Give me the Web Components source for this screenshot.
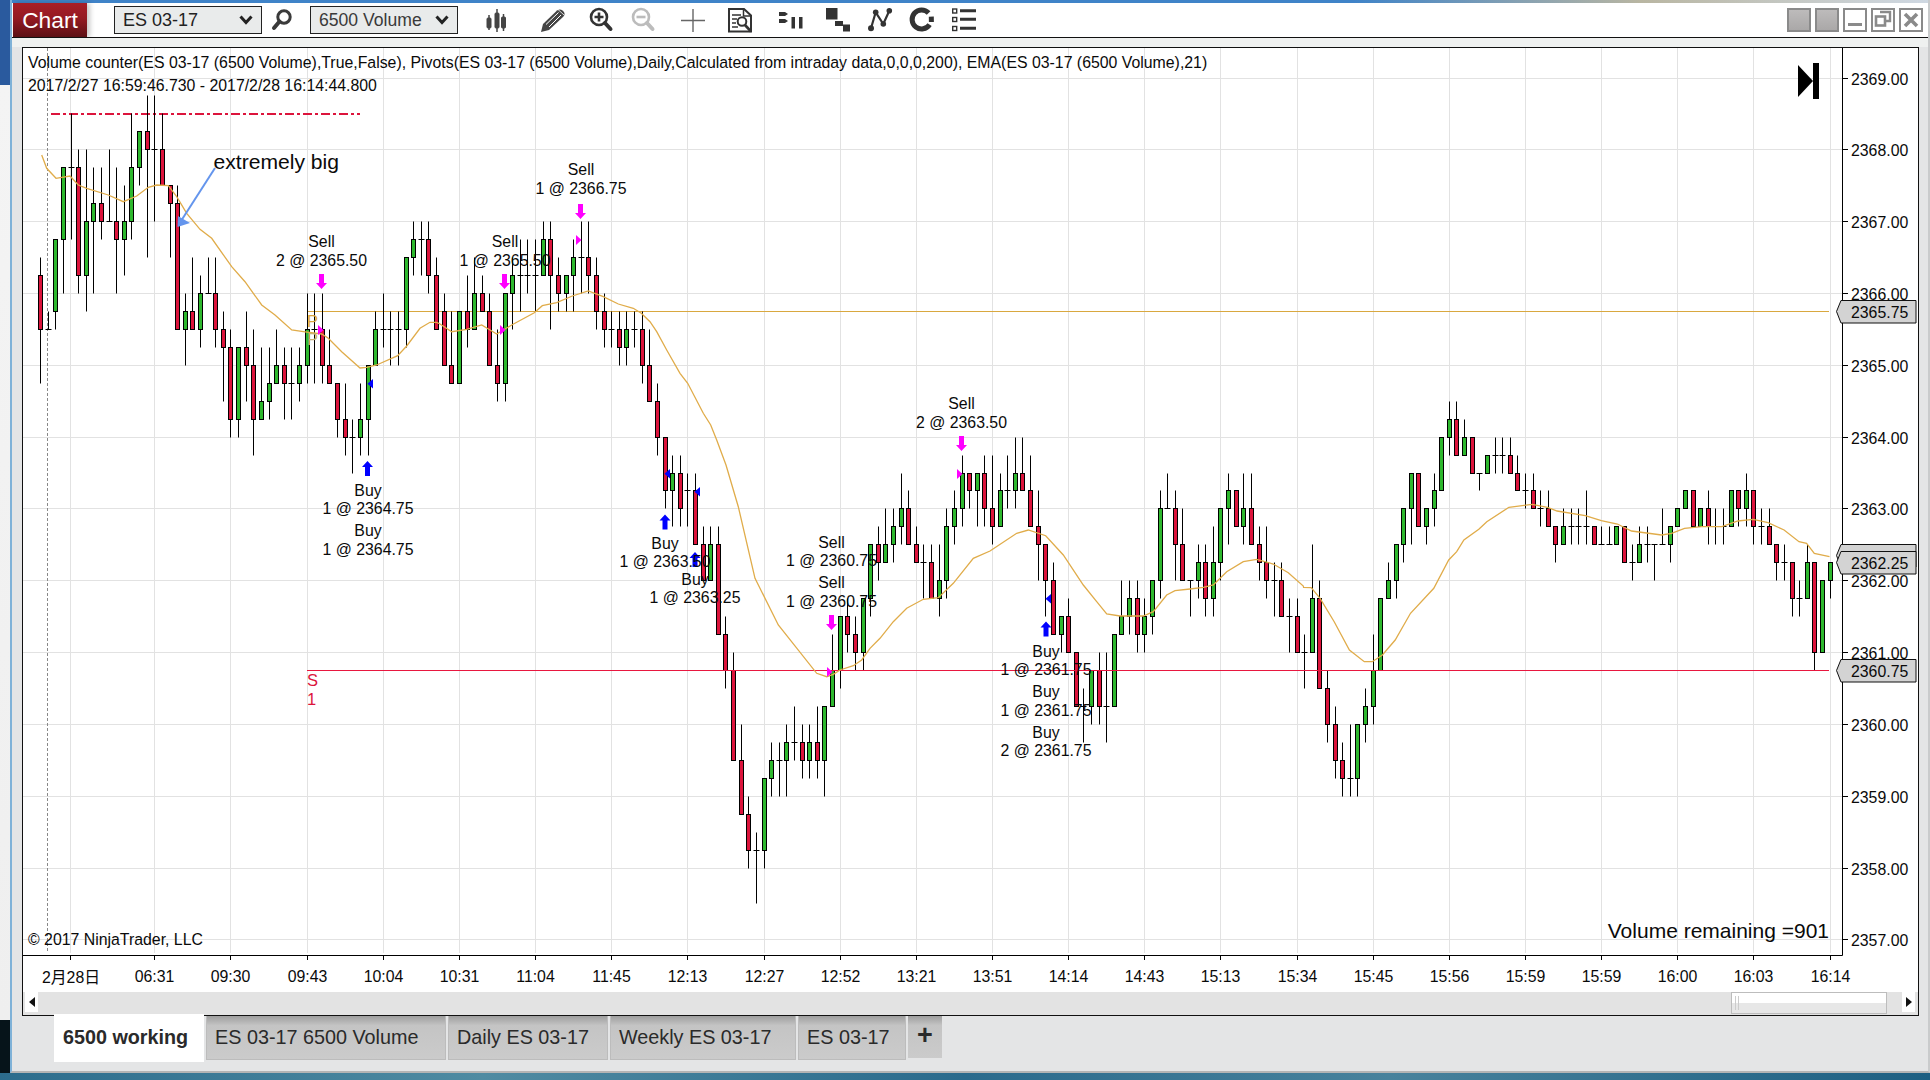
<!DOCTYPE html>
<html lang="en"><head><meta charset="utf-8"><title>Chart</title>
<style>html,body{margin:0;padding:0;height:1080px;overflow:hidden;background:#fff;font-family:"Liberation Sans","Noto Sans CJK SC",sans-serif}</style>
</head><body>
<nt-desktop>
  <nt-toolbar slot="toolbar">
    <nt-brand>Chart</nt-brand>
    <nt-select style="margin-left:27px;width:148px;color:#222;font-size:18px">ES 03-17</nt-select>
    <nt-icon name="search" style="margin-left:8px"></nt-icon>
    <nt-select style="margin-left:16px;width:148px;color:#3a3a3a;font-size:17.6px">6500 Volume</nt-select>
    <nt-icon name="bars" style="margin-left:26px"></nt-icon>
    <nt-icon name="pencil" style="margin-left:33px"></nt-icon>
    <nt-icon name="zoomin" style="margin-left:23px"></nt-icon>
    <nt-icon name="zoomout" style="margin-left:18px"></nt-icon>
    <nt-icon name="cross" style="margin-left:27px"></nt-icon>
    <nt-icon name="report" style="margin-left:23px"></nt-icon>
    <nt-icon name="align" style="margin-left:27px"></nt-icon>
    <nt-icon name="squares" style="margin-left:23px"></nt-icon>
    <nt-icon name="nodes" style="margin-left:18px"></nt-icon>
    <nt-icon name="circle" style="margin-left:18px"></nt-icon>
    <nt-icon name="list" style="margin-left:18px"></nt-icon>
    <nt-winbtn kind="fill" style="margin-left:auto"></nt-winbtn>
    <nt-winbtn kind="fill"></nt-winbtn>
    <nt-winbtn kind="min"></nt-winbtn>
    <nt-winbtn kind="restore"></nt-winbtn>
    <nt-winbtn kind="close"></nt-winbtn>
  </nt-toolbar>
  <nt-chart slot="chart"></nt-chart>
  <nt-tabs slot="tabs">
    <nt-tab active style="width:150px">6500 working</nt-tab>
    <nt-tab style="width:240px">ES 03-17 6500 Volume</nt-tab>
    <nt-tab style="width:160px">Daily ES 03-17</nt-tab>
    <nt-tab style="width:186px">Weekly ES 03-17</nt-tab>
    <nt-tab style="width:108px">ES 03-17</nt-tab>
    <nt-tab plus style="width:34px">+</nt-tab>
  </nt-tabs>
</nt-desktop>
<script>
const FONT='"Liberation Sans","Noto Sans CJK SC",sans-serif';
function def(name,css,html,init){
  customElements.define(name,class extends HTMLElement{
    constructor(){super();const r=this.attachShadow({mode:'open'});
      r.innerHTML='<style>'+css+'</style>'+(typeof html==='function'?html(this):html);}
    connectedCallback(){if(init&&!this._i){this._i=1;init(this)}}
  });
}
def('nt-desktop',`
:host{display:grid;grid-template-columns:10px 1fr;grid-template-rows:1fr 7px;width:1930px;height:1080px;font-family:${FONT}}
.left{grid-row:1;display:flex;flex-direction:column}
.a{height:85px;background:#2a5a9e}.b{height:935px;background:linear-gradient(#f4f4f4,#efefef)}.c{flex:1;background:#06141a}
.win{background:#e4e5e6;border-left:2px solid #7fb2d8;border-right:2px solid #c9cbcc;border-bottom:2px solid #b4b4b4;display:flex;flex-direction:column;min-width:0}
.top{height:3px;background:linear-gradient(90deg,#3f83c8 0,#3f83c8 70%,#b9b6a2 85%,#cfd8e2 100%)}
.strip{height:9px;background:#eff1f0;border-top:1px solid #111}
.chartwrap{padding:0 9px 0 10px}
.sea{grid-column:1/3;background:linear-gradient(90deg,#2c6c8c,#4f8ba2 25%,#2a6a8c 50%,#48829c 72%,#1d5f82)}
`,`<div class="left"><div class="a"></div><div class="b"></div><div class="c"></div></div>
<div class="win"><div class="top"></div><slot name="toolbar"></slot><div class="strip"></div><div class="chartwrap"><slot name="chart"></slot></div><slot name="tabs"></slot></div>
<div class="sea"></div>`);
def('nt-toolbar',`:host{display:flex;align-items:center;height:34px;background:#fff;padding:0 5px 0 1px}`,`<slot></slot>`);
def('nt-brand',`:host{display:flex;align-items:center;justify-content:center;width:74px;height:34px;color:#fff;font-size:22.8px;box-shadow:3px 0 5px rgba(0,0,0,.22);background:linear-gradient(#a81e28,#941a22 45%,#5c1015)}`,`<slot></slot>`);
def('nt-select',`:host{display:flex;align-items:center;box-sizing:border-box;height:28px;border:1px solid #222;background:#e9ebeb;padding-left:8px;position:relative}
svg{position:absolute;right:8px;top:8px}`,`<slot></slot><svg width="14" height="10" viewBox="0 0 14 10"><path d="M1.5 1.5 7 7.5 12.5 1.5" fill="none" stroke="#222" stroke-width="3"/></svg>`);
const I={
search:'<circle cx="14" cy="9" r="6.2" fill="none" stroke="#3a3a3a" stroke-width="3"/><path d="M9.5 13.5 4 20" stroke="#3a3a3a" stroke-width="4" stroke-linecap="round"/>',
bars:'<g fill="#444" stroke="#444"><path d="M5 7v15M13 1v23M19.5 6v17" stroke-width="1.5"/><rect x="3" y="10" width="4" height="10" rx="1"/><rect x="11" y="5" width="4" height="15" rx="1"/><rect x="17.5" y="9" width="4" height="11" rx="1"/></g>',
pencil:'<path d="M0 24 2 16 16 2.5Q19 .5 21.5 2.5L23 4Q24.5 6.5 22 9L8 22Z" fill="#444"/><path d="M5 16.5 17.5 4.5M8 19 20 7" stroke="#fff" stroke-width="1"/><path d="M17 1.5 23 7" stroke="#fff" stroke-width=".8"/>',
zoomin:'<circle cx="11" cy="9" r="8" fill="none" stroke="#333" stroke-width="2.6"/><path d="M17 15 22.5 21" stroke="#333" stroke-width="4" stroke-linecap="round"/><path d="M6.5 9h9M11 4.5v9" stroke="#333" stroke-width="2.6"/>',
zoomout:'<circle cx="11" cy="9" r="8" fill="none" stroke="#bcbcbc" stroke-width="2.6"/><path d="M17 15 22.5 21" stroke="#bcbcbc" stroke-width="4" stroke-linecap="round"/><path d="M6.5 9h9" stroke="#bcbcbc" stroke-width="2.6"/>',
cross:'<path d="M0 12.5H24M12 1V24" stroke="#666" stroke-width="1.4"/>',
report:'<path d="M1 1H16L23 7.5V23.5H1Z" fill="#fff" stroke="#333" stroke-width="2"/><path d="M15.5 1V8H23" fill="none" stroke="#333" stroke-width="1.5"/><path d="M4 7h9M4 11h5M4 15h4M4 19h6" stroke="#333" stroke-width="1.6"/><circle cx="14" cy="13.5" r="4.3" fill="#fff" stroke="#333" stroke-width="2"/><path d="M17 17 23 23.5" stroke="#333" stroke-width="2.6"/>',
align:'<path d="M0 4H6L9 6 6 8H0ZM0 11H6L9 13 6 15H0Z" fill="#333"/><rect x="12.5" y="9" width="3.5" height="11.5" fill="#333"/><rect x="20" y="9" width="3.5" height="11.5" fill="#333"/>',
squares:'<path d="M0 0H11.5V11.5H0ZM9 13H17V18H9ZM17 16.5H24V23.5H17Z" fill="#333"/>',
nodes:'<path d="M3 20.3 7.7 4.3 15.3 16 21.3 2.7" fill="none" stroke="#333" stroke-width="2.2"/><circle cx="3" cy="20.3" r="3" fill="#333"/><circle cx="7.7" cy="4.3" r="2.8" fill="#333"/><circle cx="15.3" cy="16" r="2.8" fill="#333"/><circle cx="21.3" cy="2.7" r="2.8" fill="#333"/>',
circle:'<path d="M19.6 16.6A9.5 9.5 0 1 1 18.6 5M21.3 8.6 21.4 14" fill="none" stroke="#333" stroke-width="5"/>',
list:'<g fill="#fff" stroke="#333" stroke-width="1.4"><rect x=".7" y="1" width="4" height="4"/><rect x=".7" y="9.5" width="4" height="4"/><rect x=".7" y="18.5" width="4" height="4"/></g><path d="M8 2.8H24M8 11.3H24M8 20.3H24" stroke="#333" stroke-width="3"/>'
};
def('nt-icon',`:host{display:block;width:24px;height:24px;flex:none}svg{display:block;overflow:visible}`,
  el=>`<svg width="24" height="24" viewBox="0 0 24 24">${I[el.getAttribute('name')]||''}</svg>`);
const W={min:'<path d="M5 16.5H19" stroke="#8a8a8a" stroke-width="3"/>',
restore:'<path d="M9 4H19V13H15" fill="none" stroke="#8a8a8a" stroke-width="2.4"/><rect x="5" y="8.5" width="9" height="9" fill="none" stroke="#8a8a8a" stroke-width="2.6"/>',
close:'<path d="M6 6 18 18M18 6 6 18" stroke="#8a8a8a" stroke-width="3.6"/>',fill:''};
def('nt-winbtn',`:host{display:block;box-sizing:border-box;width:24px;height:24px;margin-right:4px;border:2px solid #8a8a8a;background:#fff;flex:none}
:host([kind=fill]){background:linear-gradient(#bdbbbb,#aaa8a8)}:host(:last-child){margin-right:0}
svg{display:block;margin:-2px}`,el=>`<svg width="24" height="24" viewBox="0 0 24 24">${W[el.getAttribute('kind')]}</svg>`);
def('nt-tabs',`:host{display:flex;gap:2px;padding-left:42px;height:55px;align-items:flex-start;color:#2a2a2a}`,`<slot></slot>`);
def('nt-tab',`:host{display:flex;align-items:center;box-sizing:border-box;height:44px;padding-left:8px;font-size:19.8px;border:1px solid #bcbcbc;border-top:0;background:linear-gradient(#9e9e9e,#c4c4c4 22%,#cbcbcb)}
:host([active]){height:48px;margin-top:-2px;padding-bottom:2px;background:#fff;border:0;font-weight:bold;font-size:19.75px;padding-left:9px;position:relative}
:host([plus]){height:42px;justify-content:center;padding:0 0 3px;border:0;font-weight:bold;font-size:27px}`,`<slot></slot>`);
def('nt-scrollbar',`:host{display:block;position:relative;height:23px;background:#e3e3e3}
.b{position:absolute;top:0;width:13px;height:20px;background:#fff;display:flex;align-items:center;justify-content:center}
.l{left:2px}.r{right:3px}
.t{position:absolute;left:1707.5px;top:0;box-sizing:border-box;width:156px;height:22px;border:1.5px solid #bdbdbd;background:linear-gradient(#fff 50%,#e7e7e7 50%)}
.t i{position:absolute;left:3px;top:3px;width:1px;height:14px;background:#ccc;box-shadow:3px 0 #ccc}`,
`<div class="b l"><svg width="6" height="10"><path d="M6 0V10L0 5Z" fill="#111"/></svg></div><div class="t"><i></i></div><div class="b r"><svg width="6" height="10"><path d="M0 0V10L6 5Z" fill="#111"/></svg></div>`);

const BARS=`R 11 14 10 17,D 14 13 14,G 9 13 9 14,G 5 9 5 12,D 5 2 9,R 5 11 4 12,G 8 11 4 13,G 7 8 5 12,R 7 8 5 9,D 8 4 8,R 8 9 5 12,G 8 9 6 11,G 5 8 2 9,G 3 5 3 6,R 3 4 1 10,D 4 1 8,R 4 6 2 6,R 6 7 6 10,R 7 14 6 14,G 13 14 12 16,R 13 14 10 14,G 12 14 11 15,D 12 10 12,R 12 14 10 15,R 14 15 13 18,R 15 19 14 20,G 15 19 15 20,R 15 16 13 18,R 16 19 14 21,G 18 19 15 19,G 17 18 15 19,G 16 17 14 17,R 16 17 15 19,D 17 15 19,G 16 17 15 18,G 14 16 12 17,D 14 12 17,R 14 16 12 17,R 16 17 14 17,R 17 19 17 20,R 19 20 17 21,D 20 19 22,G 19 20 17 21,G 16 19 16 21,G 14 16 13 16,D 14 12 15,D 14 13 16,D 14 13 16,G 10 14 10 15,G 9 10 8 11,D 9 8 11,R 9 11 8 12,R 11 14 10 14,R 13 16 12 16,R 16 17 13 17,G 13 17 13 17,R 13 14 11 15,G 12 14 10 14,R 12 13 11 13,R 13 16 12 16,R 16 17 14 18,G 12 17 12 18,G 11 12 10 14,D 11 9 13,D 11 9 12,D 11 9 13,G 9 11 8 11,R 9 11 8 14,R 11 12 10 13,G 11 12 11 13,G 10 11 9 13,D 10 8 12,R 10 11 8 12,R 11 13 10 14,R 13 14 12 15,D 14 13 15,R 14 15 13 16,G 14 15 13 16,D 14 13 15,R 14 16 13 17,R 16 18 14 18,R 18 20 17 21,R 20 23 20 24,G 22 23 21 25,R 22 24 21 25,D 23 22 25,R 23 26 22 26,R 26 28 25 28,G 26 28 25 28,R 26 31 25 31,R 31 33 30 34,R 33 38 32 38,R 38 41 36 41,R 41 43 40 44,D 43 42 46,G 39 43 39 44,G 38 39 37 40,D 38 37 40,G 37 38 36 40,D 37 35 38,R 37 38 36 39,G 37 38 36 39,R 37 38 35 39,G 35 38 35 40,G 33 35 31 35,G 30 33 30 34,R 30 31 29 32,R 31 32 30 33,G 29 32 29 33,G 26 29 26 30,R 26 27 25 28,G 26 27 24 27,G 25 26 24 27,G 24 25 22 26,R 24 26 23 26,R 26 27 25 27,D 27 26 29,R 27 29 26 29,G 28 29 26 30,G 25 28 24 29,G 24 25 23 26,G 22 24 21 25,R 22 23 22 24,G 22 23 22 25,R 22 24 21 25,R 24 25 21 26,G 23 25 22 25,D 23 21 24,G 22 23 20 24,R 22 23 20 23,R 23 25 21 25,R 25 26 23 28,R 26 28 26 30,R 28 31 27 31,G 30 31 30 32,R 30 32 29 32,R 32 35 32 35,D 35 34 37,G 33 35 33 36,R 33 35 32 36,D 35 32 37,G 31 35 31 35,G 30 31 28 31,G 29 30 28 31,R 29 31 28 32,G 30 31 29 32,G 28 30 28 31,G 24 28 23 29,D 24 22 24,R 24 26 23 28,R 26 28 24 28,D 28 28 30,G 27 28 26 29,R 27 29 26 30,G 27 29 25 30,G 24 27 24 28,G 23 24 22 26,R 23 25 23 25,G 24 25 22 26,R 24 26 22 26,R 26 27 25 28,R 27 28 25 29,D 28 27 30,R 28 30 27 30,D 30 29 32,R 30 32 29 32,D 32 31 34,G 29 32 26 32,R 29 34 28 34,R 34 36 33 37,R 36 38 35 39,R 38 39 37 40,D 39 36 40,G 36 39 36 40,G 35 36 34 37,G 33 35 31 36,G 29 33 29 33,G 28 29 27 29,G 26 28 26 29,G 24 26 24 27,G 22 24 22 26,R 22 25 22 25,G 24 25 24 26,G 23 24 22 25,G 20 23 20 23,G 19 20 18 21,R 19 21 18 21,G 20 21 19 21,R 20 22 20 22,D 22 22 23,G 21 22 21 22,D 21 20 22,D 21 20 22,R 21 22 20 22,R 22 23 21 23,D 23 22 24,R 23 24 22 24,D 24 23 25,R 24 25 23 25,R 25 26 25 27,G 25 26 24 26,D 25 24 26,D 25 24 26,D 25 23 26,R 25 26 25 26,D 26 25 26,D 26 25 26,G 25 26 25 26,R 25 27 25 27,D 27 26 28,G 26 27 25 27,D 26 25 27,D 26 26 28,D 26 24 26,G 25 26 25 27,G 24 25 24 25,G 23 24 23 24,R 23 25 23 25,G 24 25 24 25,R 24 25 23 26,D 25 24 26,D 25 24 26,G 23 25 23 25,R 23 24 23 25,G 23 24 22 25,R 23 25 23 26,D 25 24 26,R 25 26 24 26,R 26 27 26 28,D 27 26 28,R 27 29 27 30,D 29 28 30,G 27 29 26 29,R 27 32 27 33,G 28 32 28 32,G 27 28 27 29`.split(',').map(s=>s.split(' '));
const bx=i=>Math.round(40.1+7.615*i)+.5, ty=t=>Math.floor(78.02+17.955*t)+.5;
const map=(x0,y0,sx,a)=>{const o=[];for(let i=0;i<a.length;i+=2)o.push([x0+a[i]/sx,y0+a[i+1]/3]);return o};
const EMA=[].concat(
 map(20,90,3,[65,195,80,235,108,265,150,258,175,285,200,295,265,315,310,335,350,318,385,292,410,285,445,287,470,320,500,370,540,418,575,445,635,530,675,575,725,645,765,675,815,720,850,725,905,732]),
 map(20,240,3,[925,295,965,335,1020,384,1040,382,1070,375,1133,347,1160,318,1200,265,1230,247,1250,247]),
 map(440,200,3,[0,372,35,395,80,388,125,375,170,402,215,375,283,338,307,317,350,308,397,288,445,273,490,290,535,312,580,325,604,340,630,365,650,395,680,450,720,520,743,550,790,640,812,675]),
 map(640,440,3,[230,0,258,75,295,200,345,415,415,555,530,700,560,710,580,703,600,690,640,677,665,660,690,625,720,595,760,545,800,505,850,478,895,473,940,430,1000,355,1050,333,1130,280,1165,270]),
 map(880,420,3,[497,347,550,405,610,495,650,545,680,582,720,588,790,588,820,575,860,525,885,512,930,507,970,502,1000,495,1040,455,1090,425,1130,418,1180,432,1225,458,1270,498]),
 map(1300,380,2.489,[9,622,28,623,50,655,85,725,123,810,160,845,180,845,205,825,237,780,275,700,333,625,370,540,390,515,408,480,445,448,465,425,520,382,578,373,616,382,640,393,710,407,750,422,790,432,825,453,900,465,925,460,957,445,1000,440,1050,440,1090,423,1128,418,1165,428,1205,450,1242,485,1261,490,1280,520,1318,530])
);
const TIMES=["06:31","09:30","09:43","10:04","10:31","11:04","11:45","12:13","12:27","12:52","13:21","13:51","14:14","14:43","15:13","15:34","15:45","15:56","15:59","15:59","16:00","16:03","16:14"];
function chartSvg(){
  let s='';const L=23,R=1842.5,T=48,B=953;
  let g='';
  const gx=[70.5].concat(TIMES.map((_,k)=>bx(15+k*10)));
  gx.forEach(x=>{g+=`M${x} ${T}V${B}`});
  for(let p=0;p<=12;p++)g+=`M${L} ${ty(p*4)}H${R}`;
  s+=`<path d="${g}" stroke="#e2e2e2" fill="none"/>`;
  s+=`<path d="M47.5 ${T}V952" stroke="#888" stroke-dasharray="3 2" fill="none"/>`;
  const tx=(x,y,t,ex='')=>`<text x="${x}" y="${y}" ${ex}>${t}</text>`;
  let w='',d='',rb='',gb='';
  BARS.forEach((b,i)=>{const x=bx(i);
    if(b[0]==='D'){const [,t,a,c]=b;w+=`M${x} ${ty(+a)}V${ty(+c)}`;d+=`M${x-3} ${ty(+t)}H${x+3}`;}
    else{const [k,t1,t2,a,c]=b;w+=`M${x} ${ty(+a)}V${ty(+c)}`;
      const y1=ty(+t1),y2=ty(+t2);
      const r=`<rect x="${x-2}" y="${y1}" width="4" height="${y2-y1}"/>`;if(k==='R')rb+=r;else gb+=r;}
  });
  s+=`<path d="M51 114H360" stroke="#dc143c" stroke-width="2" stroke-dasharray="9 3 3 3" fill="none"/>`;
  s+=`<path d="M307 311.5H1829" stroke="#d9a83f" stroke-width="1.2" fill="none"/>`;
  s+=`<path d="${w}${d}" stroke="#000" fill="none"/>`;
  s+=`<g fill="#dc143c" stroke="#000">${rb}</g><g fill="#2eb82e" stroke="#000">${gb}</g>`;
  s+=`<path d="M307 670.5H1829" stroke="#e8173f" stroke-width="1.2" fill="none"/>`;
  s+=`<polyline points="${EMA.map(p=>p[0].toFixed(1)+','+p[1].toFixed(1)).join(' ')}" fill="none" stroke="#e0ac4a" stroke-width="1.3"/>`;
  s+=`<g font-size="16.5"><text x="307" y="326.5" fill="#daa53c">P</text><text x="307" y="345" fill="#c8b070">P</text><text x="307" y="686" fill="#dc143c">S</text><text x="307" y="705" fill="#dc143c">1</text></g>`;
  const dn=(x,y)=>`<path d="M${x-2.5} ${y}h5v9h3l-5.5 6-5.5-6h3z" fill="#f0f"/>`;
  const up=(x,y)=>`<path d="M${x-2.5} ${y+15}h5v-9h3l-5.5-6-5.5 6h3z" fill="#00f"/>`;
  const mk=(x,y)=>`<path d="M${x} ${y}l5.5 5-5.5 5z" fill="#f0f"/>`;
  const bk=(x,y)=>`<path d="M${x+5} ${y}l-5.5 4.7 5.5 4.7z" fill="#00f"/>`;
  [[321.5,274],[504.5,274],[580.5,204],[831.5,615],[961.5,436]].forEach(a=>s+=dn(a[0],a[1]));
  [[367.5,461],[665,514.5],[695,552],[1046,621.5]].forEach(a=>s+=up(a[0],a[1]));
  [[318,325],[500,325],[576,235],[827,667],[957,469]].forEach(a=>s+=mk(a[0],a[1]));
  [[368,379],[665,469],[695,487],[1046,594]].forEach(a=>s+=bk(a[0],a[1]));
  s+=`<path d="M215 168 181 221" stroke="#6495ed" stroke-width="2" fill="none"/><path d="M177.5 227 190 223 178 216Z" fill="#6495ed"/>`;
  s+=`<path d="M1798 65 1813 81 1798 97ZM1813 63h6v36h-6z" fill="#000"/>`;
  const labels=[[321.5,247,'Sell'],[321.5,266,'2 @ 2365.50'],[505,247,'Sell'],[505,266,'1 @ 2365.50'],[581,175,'Sell'],[581,194,'1 @ 2366.75'],
   [368,496,'Buy'],[368,514,'1 @ 2364.75'],[368,536,'Buy'],[368,555,'1 @ 2364.75'],[665,549,'Buy'],[665,567,'1 @ 2363.50'],[695,585,'Buy'],[695,603,'1 @ 2363.25'],
   [831.5,548,'Sell'],[831.5,566,'1 @ 2360.75'],[831.5,588,'Sell'],[831.5,607,'1 @ 2360.75'],[961.5,409,'Sell'],[961.5,428,'2 @ 2363.50'],
   [1046,657,'Buy'],[1046,675,'1 @ 2361.75'],[1046,697,'Buy'],[1046,716,'1 @ 2361.75'],[1046,738,'Buy'],[1046,756,'2 @ 2361.75']];
  s+=`<g font-size="15.85" text-anchor="middle" fill="#0a0a0a">`+labels.map(l=>tx(l[0],l[1],l[2])).join('')+`</g>`;
  s+=`<g font-size="15.85" fill="#0a0a0a">`+tx(28,68,'Volume counter(ES 03-17 (6500 Volume),True,False), Pivots(ES 03-17 (6500 Volume),Daily,Calculated from intraday data,0,0,0,200), EMA(ES 03-17 (6500 Volume),21)')+tx(28,91,'2017/2/27 16:59:46.730 - 2017/2/28 16:14:44.800')+tx(28,945,'© 2017 NinjaTrader, LLC')+`</g>`;
  s+=tx(213.5,169,'extremely big','font-size="21.1" fill="#0a0a0a"');
  s+=tx(1829,937.5,'Volume remaining =901','font-size="21" fill="#0a0a0a" text-anchor="end"');
  s+=`<path d="M${L-1} 955.5H${R}M${R} ${T}V955.5" stroke="#000" fill="none"/>`;
  let ticks='';
  gx.forEach(x=>{ticks+=`M${x} 955V960`});
  for(let p=0;p<=12;p++)ticks+=`M${R} ${ty(p*4)}H1848`;
  s+=`<path d="${ticks}" stroke="#000" fill="none"/>`;
  s+=`<g font-size="15.85" fill="#0a0a0a">`;
  for(let p=0;p<=12;p++)s+=tx(1851,ty(p*4)+6.5,(2369-p)+'.00');
  s+=`</g><g font-size="15.85" fill="#0a0a0a" text-anchor="middle">`+tx(71,983,'2月28日')+TIMES.map((t,k)=>tx(bx(15+k*10),982,t)).join('')+`</g>`;
  const box=(y,txt)=>`<path d="M1841 ${y}H1916V${y+22.5}H1841L1836.5 ${y+11}Z" fill="#d3d3d3" stroke="#111"/>`+(txt?tx(1851,y+17,txt,'font-size="15.85" fill="#0a0a0a"'):'');
  s+=box(300.5,'2365.75');
  s+=box(544.5,'')+box(551.5,'2362.25');
  s+=box(659.5,'2360.75');
  return `<svg width="1895" height="944" viewBox="23 48 1895 944" style="display:block;overflow:hidden">${s}</svg>`;
}
def('nt-chart',`:host{display:block;box-sizing:border-box;width:1897px;height:969px;border:1px solid #111;background:#fff;font-family:${FONT}}`,
  ()=>chartSvg()+'<nt-scrollbar></nt-scrollbar>');
</script>
</body></html>
